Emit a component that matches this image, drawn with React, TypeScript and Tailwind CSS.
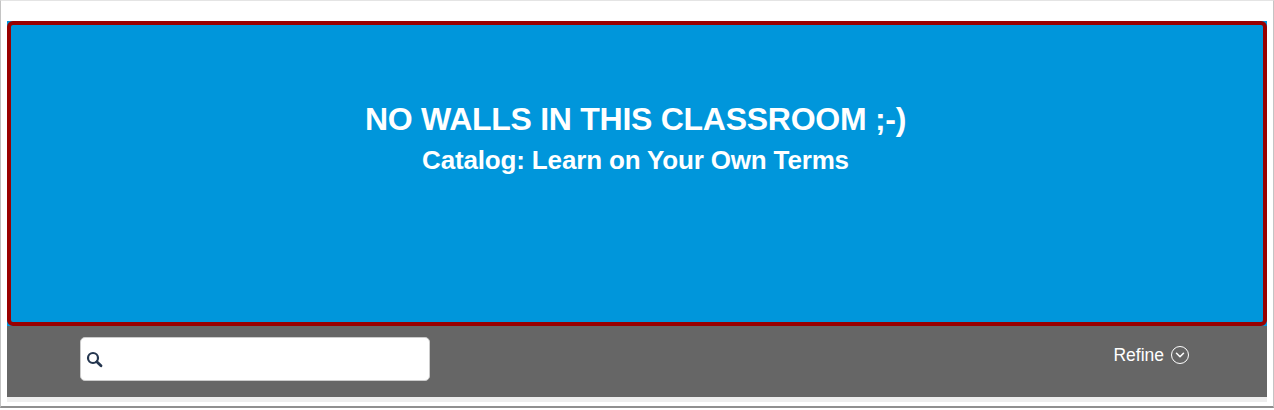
import { ChevronDown } from "lucide-react";

function SearchIcon() {
	return (
		<svg width="17" height="17" viewBox="0 0 17 17" fill="none" className="text-[#24364f]">
			<circle cx="7" cy="7" r="5" stroke="currentColor" strokeWidth="2.2" fill="#ffffff" />
			<path d="M10.8 10.8 L15 14.8" stroke="currentColor" strokeWidth="2.8" strokeLinecap="round" />
		</svg>
	);
}

export default function App() {
	return (
		<div className="h-[410px] w-[1274px] overflow-hidden bg-white font-['Liberation_Sans',Arial,sans-serif]">
			<div className="h-[408px] w-[1274px] border-t border-l border-b-2 border-r border-t-[#e4e4e4] border-l-[#c4c4c4] border-b-[#8f8f8f] border-r-[#c4c4c4] pt-[20px] pr-[6px] pb-[3px] pl-[6px]">
				<div className="bg-[#0096db]">
					<div className="flex h-[305px] flex-col items-center rounded-[6px] border-4 border-[#990000] pt-[72px] pr-[3px] text-white">
						<h1 className="text-[32px] leading-[44px] font-bold tracking-[-0.27px]">NO WALLS IN THIS CLASSROOM ;-)</h1>
						<h2 className="text-[26px] leading-[39px] font-bold tracking-[-0.16px]">Catalog: Learn on Your Own Terms</h2>
					</div>
				</div>
				<div className="flex h-[71px] items-start justify-between bg-[#666666] pt-[11px] pr-[78px] pl-[73px]">
					<div className="flex h-[44px] w-[350px] items-center rounded-[5px] border border-[#cccccc] bg-white pl-[5px]">
						<SearchIcon />
					</div>
					<div className="flex h-[36px] items-center gap-[7px] text-[17.5px] text-white">
						<span>Refine</span>
						<span className="flex h-[18px] w-[18px] items-center justify-center rounded-full border-[1.5px] border-white">
							<ChevronDown size={14} strokeWidth={2.6} />
						</span>
					</div>
				</div>
				<div className="h-[5px] bg-[#eeeeee]" />
			</div>
		</div>
	);
}
